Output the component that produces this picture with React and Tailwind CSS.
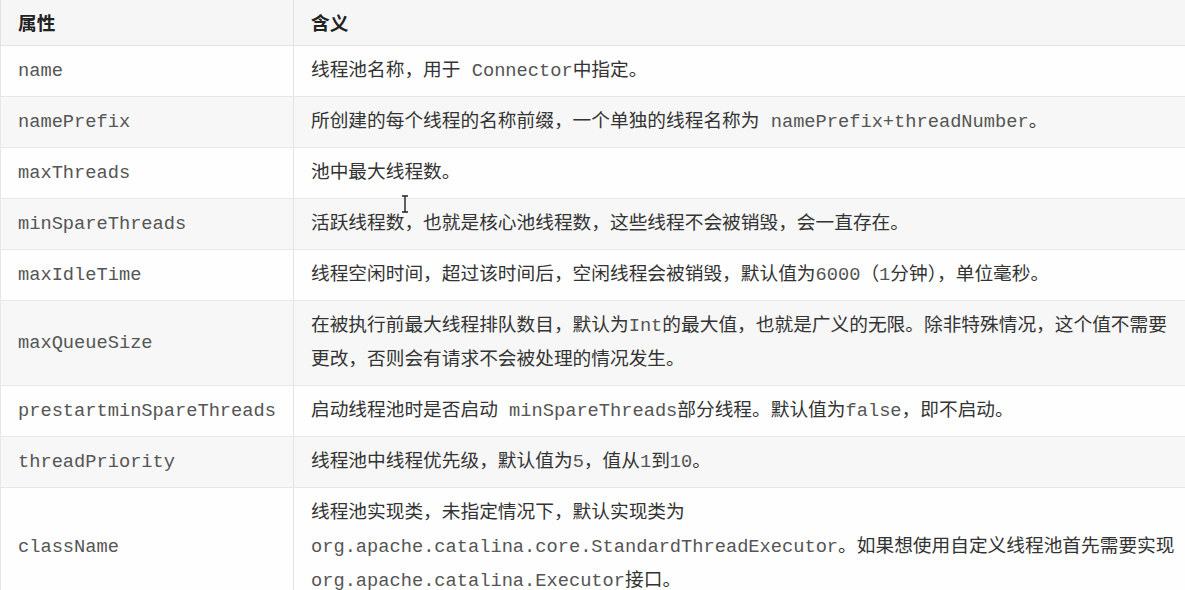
import React from 'react';

const M = ({ children }) => <span className="text-[#555]">{children}</span>;

const rows = [
    { name: 'name', desc: <>线程池名称，用于 <M>Connector</M>中指定。</> },
    { name: 'namePrefix', desc: <>所创建的每个线程的名称前缀，一个单独的线程名称为 <M>namePrefix+threadNumber</M>。</> },
    { name: 'maxThreads', desc: <>池中最大线程数。</> },
    { name: 'minSpareThreads', desc: <>活跃线程数，也就是核心池线程数，这些线程不会被销毁，会一直存在。</> },
    { name: 'maxIdleTime', desc: <>线程空闲时间，超过该时间后，空闲线程会被销毁，默认值为<M>6000</M>（<M>1</M>分钟），单位毫秒。</> },
    {
        name: 'maxQueueSize',
        desc: <>在被执行前最大线程排队数目，默认为<M>Int</M>的最大值，也就是广义的无限。除非特殊情况，这个值不需要<br />更改，否则会有请求不会被处理的情况发生。</>,
    },
    { name: 'prestartminSpareThreads', desc: <>启动线程池时是否启动 <M>minSpareThreads</M>部分线程。默认值为<M>false</M>，即不启动。</> },
    { name: 'threadPriority', desc: <>线程池中线程优先级，默认值为<M>5</M>，值从<M>1</M>到<M>10</M>。</> },
    {
        name: 'className',
        desc: <>线程池实现类，未指定情况下，默认实现类为<br /><M>org.apache.catalina.core.StandardThreadExecutor</M>。如果想使用自定义线程池首先需要实现<br /><M>org.apache.catalina.Executor</M>接口。</>,
    },
];

export default function App() {
    return (
        <div className="relative w-[1185px] h-[590px] overflow-hidden bg-[#fdfefd] text-[18.7px] text-[#333] font-['Liberation_Mono','Noto_Sans_CJK_SC',monospace]">
            {/* header */}
            <div className="grid grid-cols-[293px_1fr] h-[46px] bg-[#f5f6f5] border-b border-l border-[#e2e3e2]">
                <div className="flex items-center pl-[17px] border-r border-[#e2e3e2] font-bold text-[#222] font-['Noto_Sans_CJK_SC',sans-serif]">属性</div>
                <div className="flex items-center pl-[17px] font-bold text-[#222] font-['Noto_Sans_CJK_SC',sans-serif]">含义</div>
            </div>

            {rows.map((row, i) => (
                <div
                    key={row.name}
                    className={`grid grid-cols-[293px_1fr] border-b border-l border-[#e6e7e6] ${i % 2 === 1 ? 'bg-[#f6f7f6]' : 'bg-[#fdfefd]'}`}
                >
                    <div className="flex items-center pl-[17px] border-r border-[#e2e3e2] text-[#555]">{row.name}</div>
                    <div className="pl-[17px] pr-[8px] py-[8px] leading-[34px] whitespace-nowrap">{row.desc}</div>
                </div>
            ))}

            {/* mouse cursor */}
            <svg className="absolute left-[400px] top-[195px]" width="10" height="18" viewBox="0 0 10 18">
                <path d="M2 1h6M5 1v16M2 17h6" stroke="#222" strokeWidth="1.4" fill="none" />
            </svg>
        </div>
    );
}
